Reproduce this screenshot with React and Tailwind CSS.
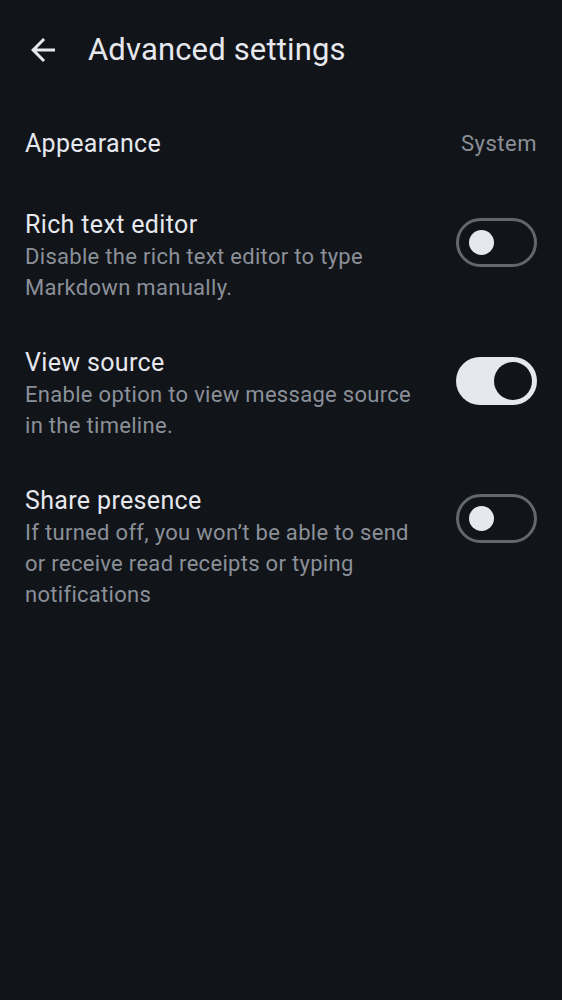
import React from 'react'

const ROWS = [
  { title: 'Rich text editor', desc: 'Disable the rich text editor to type Markdown manually.', on: false },
  { title: 'View source', desc: 'Enable option to view message source in the timeline.', on: true },
  { title: 'Share presence', desc: 'If turned off, you won’t be able to send or receive read receipts or typing notifications', on: false },
]

function Toggle({ on }) {
  if (on) {
    return (
      <div className="w-[81px] h-[48px] rounded-full bg-[#e6e8ee] flex items-center justify-end pr-[5px] shrink-0 mt-[10px]">
        <div className="w-[38px] h-[38px] rounded-full bg-[#111419]" />
      </div>
    )
  }
  return (
    <div className="w-[81px] h-[49px] rounded-full border-[3px] border-[#62666e] flex items-center pl-[10px] shrink-0 mt-[9px]">
      <div className="w-[25px] h-[25px] rounded-full bg-[#e6e8ee]" />
    </div>
  )
}

export default function App() {
  return (
    <div className="w-[562px] h-[1000px] bg-[#111419] text-[#e6e8ee] font-['Roboto',sans-serif]">
      {/* Header */}
      <div className="h-[100px] flex items-center pl-[25px]">
        <svg width="36" height="36" viewBox="0 0 24 24" fill="#e6e8ee">
          <path d="M20 11H7.83l5.59-5.59L12 4l-8 8 8 8 1.41-1.41L7.83 13H20v-2z" />
        </svg>
        <h1 className="ml-[27px] text-[31px] leading-[36px] tracking-[0.15px]">Advanced settings</h1>
      </div>

      {/* Appearance */}
      <div className="flex items-center justify-between px-[25px] mt-[27px]">
        <span className="text-[25px] leading-[32px] tracking-[0.3px]">Appearance</span>
        <span className="text-[22px] text-[#8b9098] tracking-[0.5px]">System</span>
      </div>

      {/* Switch rows */}
      <div className="flex flex-col gap-[44px] mt-[49px]">
        {ROWS.map(r => (
          <div key={r.title} className="flex items-start justify-between pl-[25px] pr-[25px]">
            <div className="w-[400px]">
              <p className="text-[25px] leading-[32px] tracking-[0.35px]">{r.title}</p>
              <p className="text-[22px] leading-[31px] text-[#8b9098] tracking-[0.3px]">{r.desc}</p>
            </div>
            <Toggle on={r.on} />
          </div>
        ))}
      </div>
    </div>
  )
}
